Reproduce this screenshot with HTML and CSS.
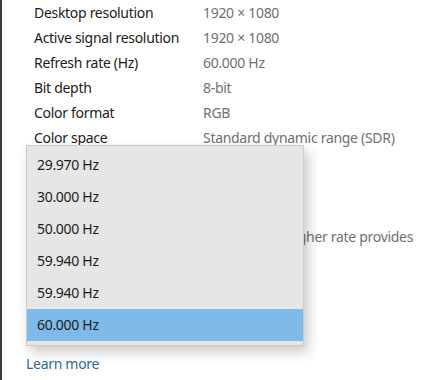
FILE: index.html
```html
<!DOCTYPE html>
<html lang="en">
<head>
    <meta charset="UTF-8">
    <meta name="viewport" content="width=device-width, initial-scale=1.0">
    <title>Advanced display</title>
    <link rel="stylesheet" href="styles.css">
</head>
<body>
    <div class="page">
        <dl class="props">
            <dt>Desktop resolution</dt><dd>1920 × 1080</dd>
            <dt>Active signal resolution</dt><dd>1920 × 1080</dd>
            <dt>Refresh rate (Hz)</dt><dd>60.000 Hz</dd>
            <dt>Bit depth</dt><dd>8-bit</dd>
            <dt>Color format</dt><dd>RGB</dd>
            <dt>Color space</dt><dd>Standard dynamic range (SDR)</dd>
        </dl>

        <p class="desc">Choose a refresh rate for your display. A higher rate provides</p>

        <a class="link" href="#">Learn more</a>

        <ul class="menu">
            <li>29.970 Hz</li>
            <li>30.000 Hz</li>
            <li>50.000 Hz</li>
            <li>59.940 Hz</li>
            <li>59.940 Hz</li>
            <li class="selected">60.000 Hz</li>
        </ul>
    </div>
</body>
</html>
```

FILE: styles.css
```css
body {
    margin: 0;
    background: #fff;
    font-family: "Noto Sans", "Open Sans", sans-serif;
    font-size: 14px;
    letter-spacing: -0.3px;
    color: #1b1b1b;
}

.page {
    position: relative;
    height: 380px;
    border-left: 2px solid #3a3a3a;
    overflow: hidden;
}

.props {
    display: grid;
    grid-template-columns: 169px auto;
    margin: 0;
    padding-left: 32px;
    line-height: 25px;
}

.props dt {
    color: #1b1b1b;
}

.props dd {
    margin: 0;
    color: #707070;
}

.desc {
    margin: 74px 0 0 30px;
    line-height: 25px;
    color: #707070;
    white-space: nowrap;
}

.link {
    display: block;
    margin: 102px 0 0 24px;
    line-height: 25px;
    color: #2c6a98;
    text-decoration: none;
}

/* dropdown list opened over the page */
.menu {
    position: absolute;
    left: 24px;
    top: 145px;
    width: 276px;
    margin: 0;
    padding: 3px 0 4px;
    list-style: none;
    background: #e6e6e6;
    border: 1px solid #cbcbcb;
    box-shadow: 4px 6px 12px rgba(0, 0, 0, 0.22);
}

.menu li {
    height: 32px;
    line-height: 32px;
    padding-left: 10px;
    color: #1b1b1b;
}

.menu li.selected {
    background: #7fbbea;
}
```
